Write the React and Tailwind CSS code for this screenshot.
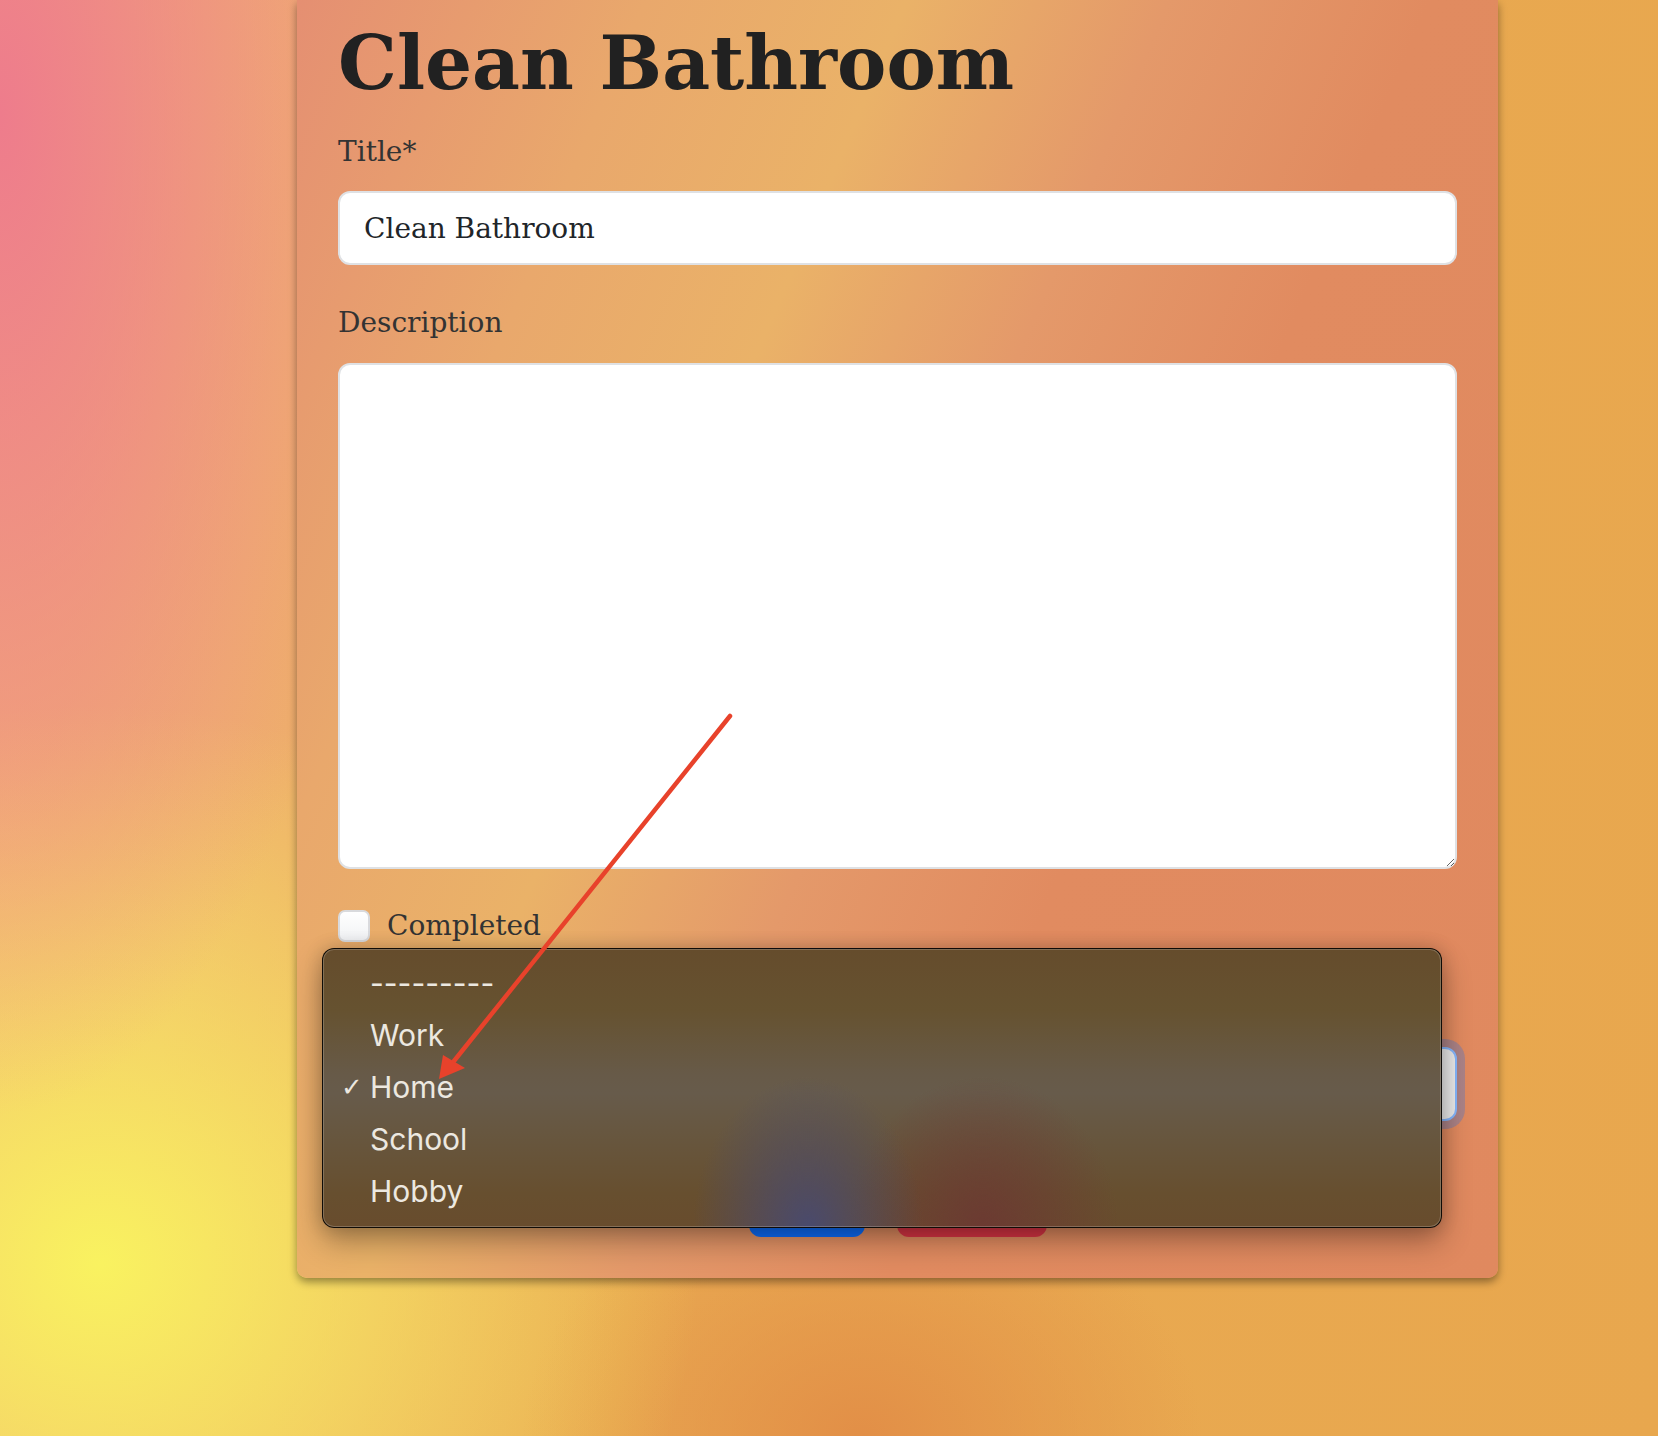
import React from 'react';

const categories = ['---------', 'Work', 'Home', 'School', 'Hobby'];

function CategoryMenu({ selected }) {
  // open native select popup; its frosted look is painted as gradients
  return (
    <div className="absolute left-[25px] top-[948px] w-[1120px] rounded-[12px] border border-[rgba(0,0,0,0.85)] pt-[8px] pb-[10px] shadow-[0_14px_30px_rgba(0,0,0,0.3),0_0_18px_rgba(0,0,0,0.18),inset_0_0_0_1px_rgba(255,255,255,0.2)] [background-image:radial-gradient(ellipse_115px_150px_at_485px_100%,rgba(72,74,112,0.95)_0%,rgba(72,74,112,0)_100%),radial-gradient(ellipse_135px_150px_at_660px_100%,rgba(108,56,50,0.9)_0%,rgba(108,56,50,0)_100%),linear-gradient(to_bottom,#654c2c_0%,#665230_22%,#675a48_45%,#675b4b_52%,#67563e_68%,#674f2f_88%,#684c2d_100%)] [font-family:Inter,'Liberation_Sans',sans-serif] text-[30px] leading-[52px] text-[#ece8e0]">
      {categories.map((c) => (
        <div key={c} className="flex pl-[18px]">
          <span className="w-[29px] text-[26px] [font-family:'DejaVu_Sans',sans-serif]">
            {c === selected ? '✓' : ''}
          </span>
          <span>{c}</span>
        </div>
      ))}
    </div>
  );
}

export default function App() {
  return (
    <div className="relative min-h-[1436px] overflow-hidden [background-image:radial-gradient(ellipse_400px_1000px_at_0%_8%,rgba(238,124,140,1)_0%,rgba(238,124,140,0)_100%),radial-gradient(ellipse_600px_560px_at_6%_88%,rgba(249,242,96,1)_0%,rgba(249,242,96,0)_100%),radial-gradient(ellipse_340px_260px_at_52%_100%,rgba(226,143,71,1)_0%,rgba(226,143,71,0)_100%),linear-gradient(100deg,#f2ad79_0%,#efb06f_18%,#e9aa52_45%,#e8a74e_100%)]">
      <div className="relative ml-[297px] w-[1201px] rounded-b-[10px] px-[41px] pt-[25px] pb-[41px] shadow-[0_4px_8px_rgba(0,0,0,0.4)] [background-image:linear-gradient(113deg,#e58f72_0%,#e9a86c_20%,#eab268_35%,#e4996a_50%,#e18b60_65%,#e0895f_100%)] [font-family:'DejaVu_Serif',serif]">
        <h1 className="text-[74px] leading-[76px] font-bold text-[#212121]">Clean Bathroom</h1>

        <label className="mt-[37px] block text-[28px] leading-[28px] text-[#333333]">Title*</label>
        <input
          type="text"
          value="Clean Bathroom"
          readOnly
          className="mt-[25px] block h-[74px] w-full rounded-[12px] border-2 border-[#dfe1e4] bg-white px-[24px] text-[28px] text-[#212529] outline-none"
        />

        <label className="mt-[44px] block text-[28px] leading-[28px] text-[#333333]">Description</label>
        <textarea
          readOnly
          className="mt-[26px] block h-[506px] w-full rounded-[12px] border-2 border-[#dfe1e4] bg-white px-[24px] py-[12px] text-[28px] text-[#212529] outline-none"
        />

        <div className="mt-[41px] flex items-center gap-[17px]">
          <input
            type="checkbox"
            readOnly
            className="h-[32px] w-[32px] appearance-none rounded-[7px] border-2 border-[#d9dadd] bg-[linear-gradient(#ffffff,#f1f2f4)]"
          />
          <span className="text-[28px] leading-[32px] text-[#333333]">Completed</span>
        </div>

        {/* category field sits under the open popup */}
        <div className="mt-[105px]">
          <select
            value="Home"
            onChange={() => {}}
            aria-label="Category"
            className="block h-[74px] w-full appearance-none rounded-[12px] border-2 border-[#86b7fe] bg-[#ededed] px-[24px] text-[28px] text-transparent shadow-[0_0_0_8px_rgba(13,110,253,0.25)] outline-none"
          >
            {categories.map((c) => (
              <option key={c}>{c}</option>
            ))}
          </select>
        </div>

        <div className="mt-[40px] flex justify-center gap-[32px]">
          <button aria-label="Save" className="h-[76px] w-[116px] rounded-[12px] bg-[#0d6efd]" />
          <button aria-label="Delete" className="h-[76px] w-[150px] rounded-[12px] bg-[#dc3545]" />
        </div>

        <CategoryMenu selected="Home" />
      </div>

      {/* annotation arrow */}
      <svg className="pointer-events-none absolute left-0 top-0" width="1658" height="1436">
        <line x1="730" y1="716" x2="454" y2="1061" stroke="#e8422b" strokeWidth="4.5" strokeLinecap="round" />
        <polygon points="439,1079 443,1055 465,1068" fill="#e8422b" />
      </svg>
    </div>
  );
}
